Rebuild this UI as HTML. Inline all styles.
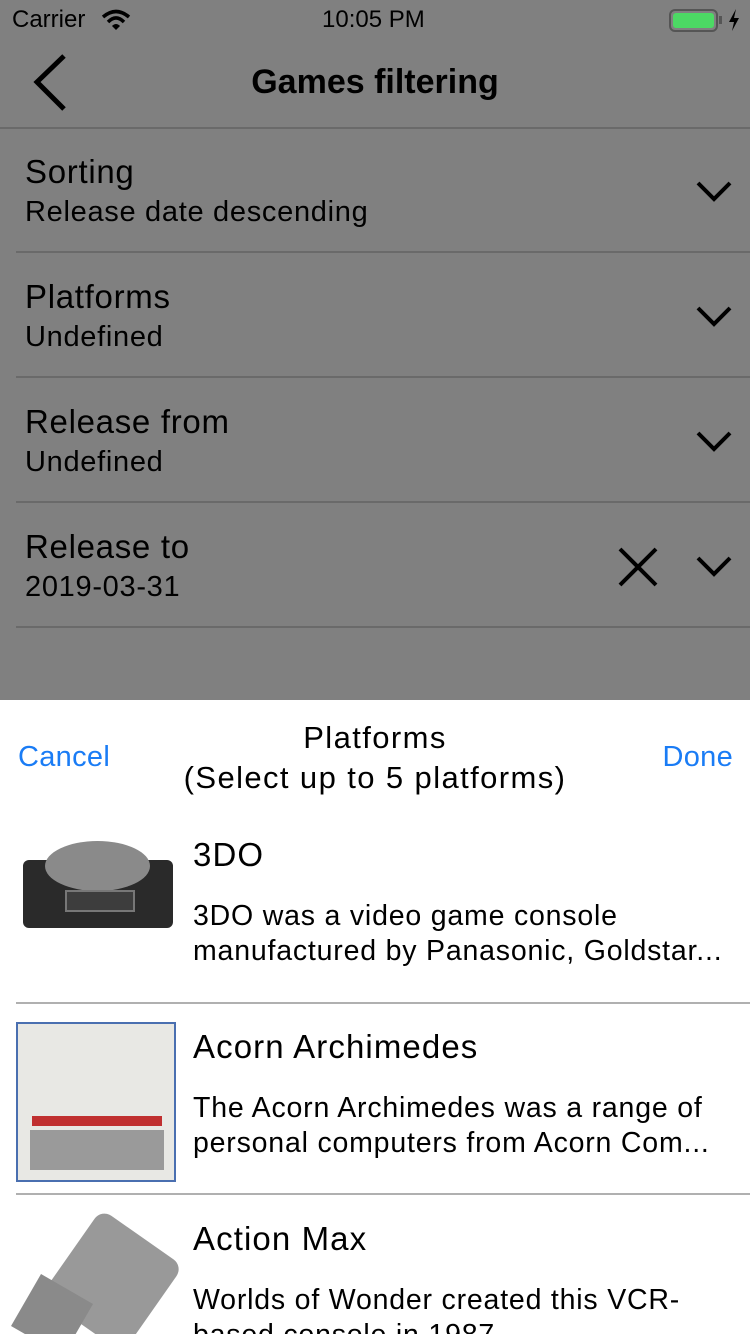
<!DOCTYPE html>
<html><head><meta charset="utf-8"><style>
*{margin:0;padding:0;box-sizing:border-box}
html,body{width:750px;height:1334px;overflow:hidden}
body{background:#808080;font-family:"Liberation Sans",sans-serif;position:relative;color:#000}
.a{position:absolute}
.div{position:absolute;left:16px;right:0;height:2px;background:#6a6a6a}
.t{position:absolute;left:25px;font-size:33px;letter-spacing:0.7px}
.s{position:absolute;left:25px;font-size:29px;letter-spacing:0.7px}
.chev{position:absolute;right:18px}
.sheet{position:absolute;left:0;top:700px;width:750px;height:634px;background:#fff;overflow:hidden}
.blue{color:#1a7cf5;font-size:29px;position:absolute}
.h{position:absolute;left:193px;font-size:33px;letter-spacing:1.1px}
.d{position:absolute;left:193px;font-size:28.5px;line-height:35px;width:560px;letter-spacing:0.8px;white-space:nowrap}
.sep{position:absolute;left:16px;right:0;height:2px;background:#b0b0b0}
</style></head><body>
<div class="a" style="left:12px;top:6px;font-size:24px">Carrier</div>
<svg class="a" style="left:101px;top:9px" width="30" height="22" viewBox="0 0 30 22"><path d="M2 8 Q15 -3 28 8" stroke="#000" stroke-width="3.5" fill="none"/><path d="M7 13 Q15 5 23 13" stroke="#000" stroke-width="3.5" fill="none"/><path d="M11 17 L15 21 L19 17 Q15 13 11 17Z" fill="#000"/></svg>
<div class="a" style="left:322px;top:6px;font-size:24px">10:05 PM</div>
<div class="a" style="left:669px;top:9px;width:49px;height:23px;border:2px solid #555;border-radius:6px;padding:2px"><div style="width:100%;height:100%;background:#4cd964;border-radius:3px"></div></div>
<div class="a" style="left:719px;top:16px;width:3px;height:8px;background:#555"></div>
<svg class="a" style="left:728px;top:9px" width="12" height="22"><path d="M8 0 L1 13 H6 L4 22 L11 9 H6Z" fill="#000"/></svg>
<svg class="a" style="left:30px;top:52px" width="40" height="62"><path d="M34 4 L7 30 L34 57" stroke="#000" stroke-width="5" fill="none"/></svg>
<div class="a" style="left:0;width:750px;top:63px;text-align:center;font-size:34px;font-weight:bold">Games filtering</div>
<div class="div" style="left:0;top:127px"></div>
<div class="t" style="top:153px">Sorting</div><div class="s" style="top:196px">Release date descending</div>
<div class="div" style="top:251px"></div>
<div class="t" style="top:278px">Platforms</div><div class="s" style="top:321px">Undefined</div>
<div class="div" style="top:376px"></div>
<div class="t" style="top:403px">Release from</div><div class="s" style="top:446px">Undefined</div>
<div class="div" style="top:501px"></div>
<div class="t" style="top:528px">Release to</div><div class="s" style="top:571px">2019-03-31</div>
<div class="div" style="top:626px"></div>
<svg class="chev" style="top:180px" width="36" height="24"><path d="M2 3 L18 19 L34 3" stroke="#000" stroke-width="4" fill="none"/></svg>
<svg class="chev" style="top:305px" width="36" height="24"><path d="M2 3 L18 19 L34 3" stroke="#000" stroke-width="4" fill="none"/></svg>
<svg class="chev" style="top:430px" width="36" height="24"><path d="M2 3 L18 19 L34 3" stroke="#000" stroke-width="4" fill="none"/></svg>
<svg class="chev" style="top:555px" width="36" height="24"><path d="M2 3 L18 19 L34 3" stroke="#000" stroke-width="4" fill="none"/></svg>
<svg class="a" style="left:617px;top:546px" width="42" height="42"><path d="M3 3 L39 39 M39 3 L3 39" stroke="#000" stroke-width="4"/></svg>
<div class="sheet">
<div class="blue" style="left:18px;top:41px;letter-spacing:0.3px">Cancel</div>
<div class="blue" style="right:17px;top:41px;letter-spacing:0.3px">Done</div>
<div class="a" style="left:0;width:750px;top:18px;text-align:center;font-size:31px;line-height:40px;letter-spacing:1.4px">Platforms<br>(Select up to 5 platforms)</div>
<div class="a" style="left:20px;top:138px;width:152px;height:120px">
 <div class="a" style="left:3px;top:22px;width:150px;height:68px;background:#2a2a2a;border-radius:6px"></div>
 <div class="a" style="left:25px;top:3px;width:105px;height:50px;background:#8a8a8a;border-radius:50%"></div>
 <div class="a" style="left:45px;top:52px;width:70px;height:22px;background:#3d3d3d;border:2px solid #777"></div>
</div>
<div class="h" style="top:136px">3DO</div>
<div class="d" style="top:199px">3DO was a video game console<br>manufactured by Panasonic, Goldstar...</div>
<div class="sep" style="top:302px"></div>
<div class="a" style="left:16px;top:322px;width:160px;height:160px;border:2px solid #4a6fb0;background:#e8e8e4">
 <div class="a" style="left:14px;top:92px;width:130px;height:10px;background:#c03030"></div>
 <div class="a" style="left:12px;top:106px;width:134px;height:40px;background:#9a9a9a"></div>
</div>
<div class="h" style="top:328px">Acorn Archimedes</div>
<div class="d" style="top:391px">The Acorn Archimedes was a range of<br>personal computers from Acorn Com...</div>
<div class="sep" style="top:493px"></div>
<div class="a" style="left:62px;top:528px;width:100px;height:106px;background:#999;border-radius:12px;transform:rotate(35deg)"></div>
<div class="a" style="left:22px;top:585px;width:60px;height:60px;background:#8a8a8a;transform:rotate(30deg)"></div>
<div class="h" style="top:520px">Action Max</div>
<div class="d" style="top:583px">Worlds of Wonder created this VCR-<br>based console in 1987</div>
</div>
</body></html>
